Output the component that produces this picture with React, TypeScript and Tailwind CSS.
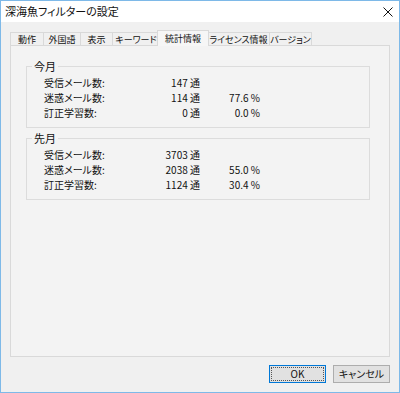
import React from "react";

type Row = { label: string; count: string; rate?: string };

const tabs = [
  { name: "動作", w: "w-[33px]" },
  { name: "外国語", w: "w-[37px]" },
  { name: "表示", w: "w-[32px]" },
  { name: "キーワード", w: "w-[47px]" },
  { name: "統計情報", w: "w-[52px]", active: true },
  { name: "ライセンス情報", w: "w-[62px]" },
  { name: "バージョン", w: "w-[43px]", last: true },
];

const thisMonth: Row[] = [
  { label: "受信メール数:", count: "147" },
  { label: "迷惑メール数:", count: "114", rate: "77.6 %" },
  { label: "訂正学習数:", count: "0", rate: "0.0 %" },
];

const lastMonth: Row[] = [
  { label: "受信メール数:", count: "3703" },
  { label: "迷惑メール数:", count: "2038", rate: "55.0 %" },
  { label: "訂正学習数:", count: "1124", rate: "30.4 %" },
];

function StatGroup({ title, rows }: { title: string; rows: Row[] }) {
  return (
    <fieldset className="border border-[#dcdcdc] pt-[3px] pb-[7px] mr-[19px]">
      <legend className="ml-[5px] px-[2px] leading-[12px] text-[11px]">
        {title}
      </legend>
      {rows.map((row) => (
        <div key={row.label} className="flex items-center h-[15px] pl-[17px]">
          <div className="w-[110px]">{row.label}</div>
          <div className="w-[46px] text-right whitespace-pre">
            {row.count} 通
          </div>
          <div className="w-[60px] text-right">{row.rate}</div>
        </div>
      ))}
    </fieldset>
  );
}

export default function App() {
  return (
    <div
      className="w-[400px] h-[393px] border border-[#7eb9e8] bg-[#f0f0f0] flex flex-col text-[10px] text-[#111] [font-feature-settings:'palt'] leading-none"
      style={{ fontFamily: '"Noto Sans CJK JP", "Noto Sans", sans-serif' }}
    >
      {/* title bar */}
      <div className="h-[21px] bg-white flex items-center justify-between pl-[4px] pr-[6px]">
        <span className="text-[11px]">深海魚フィルターの設定</span>
        <svg width="10" height="10" viewBox="0 0 10 10">
          <path d="M0.5 0.5 L9.5 9.5 M9.5 0.5 L0.5 9.5" stroke="#111" strokeWidth="1" />
        </svg>
      </div>

      <div className="flex-1 flex flex-col pt-[8px] pl-[9px] pr-[9px] pb-[9px]">
        {/* tabs */}
        <div className="flex items-end h-[15px] text-[9px] whitespace-nowrap">
          {tabs.map((t) =>
            t.active ? (
              <div
                key={t.name}
                className={`${t.w} shrink-0 h-[16px] -mx-[2px] mb-[-1px] relative z-10 bg-[#f6f6f6] border border-b-0 border-[#d9d9d9] flex items-center justify-center pb-[1px]`}
              >
                {t.name}
              </div>
            ) : (
              <div
                key={t.name}
                className={`${t.w} shrink-0 h-[13px] bg-[#f0f0f0] border-t border-l ${t.last ? "border-r" : ""} border-[#d9d9d9] flex items-center justify-center`}
              >
                {t.name}
              </div>
            )
          )}
        </div>

        {/* panel */}
        <div className="h-[312px] border border-[#d9d9d9] bg-[#f3f3f3] pt-[14px] pl-[15px] flex flex-col gap-[4px]">
          <StatGroup title="今月" rows={thisMonth} />
          <StatGroup title="先月" rows={lastMonth} />
        </div>

        {/* buttons */}
        <div className="flex justify-end gap-[7px] mt-[8px]">
          <button className="w-[57px] h-[18px] bg-[#e1e1e1] border border-[#0078d7] flex items-center justify-center p-[1px]">
            <span className="w-full h-full border border-dotted border-[#555] flex items-center justify-center">
              OK
            </span>
          </button>
          <button className="w-[57px] h-[18px] bg-[#e1e1e1] border border-[#adadad] flex items-center justify-center">
            キャンセル
          </button>
        </div>
      </div>
    </div>
  );
}
